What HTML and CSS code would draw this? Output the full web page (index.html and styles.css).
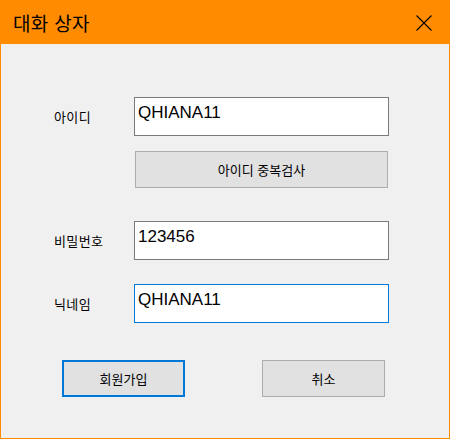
FILE: index.html
```html
<!DOCTYPE html>
<html lang="ko">
<head>
<meta charset="utf-8">
<title>대화 상자</title>
<link rel="stylesheet" href="styles.css">
</head>
<body>
<div class="window">
  <div class="titlebar">
    <span class="title">대화 상자</span>
    <svg class="close" width="16" height="16" viewBox="0 0 16 16"><path d="M0.5 0.5 L15.5 15.5 M15.5 0.5 L0.5 15.5" stroke="#000" stroke-width="1.1" fill="none"/></svg>
  </div>
  <div class="content">
    <div class="row row-id">
      <span class="label">아이디</span>
      <div class="input">QHIANA11</div>
    </div>
    <div class="row row-check">
      <button class="btn check">아이디 중복검사</button>
    </div>
    <div class="row row-pw">
      <span class="label">비밀번호</span>
      <div class="input">123456</div>
    </div>
    <div class="row row-nick">
      <span class="label">닉네임</span>
      <div class="input focused">QHIANA11</div>
    </div>
    <div class="actions">
      <button class="btn primary">회원가입</button>
      <button class="btn">취소</button>
    </div>
  </div>
</div>
</body>
</html>
```
FILE: styles.css
```css
* { box-sizing: border-box; }
html, body { margin: 0; padding: 0; }
body {
  width: 450px;
  height: 439px;
  font-family: "Noto Sans CJK KR", "Noto Sans", sans-serif;
  background: #f0f0f0;
}
.window {
  width: 450px;
  height: 439px;
  border: 1px solid #ff8c00;
  border-top: none;
  background: #f0f0f0;
  display: flex;
  flex-direction: column;
}
.titlebar {
  height: 44px;
  margin: 0 -1px;
  background: #ff8c00;
  display: flex;
  align-items: center;
  padding-left: 13px;
  padding-right: 18px;
  justify-content: space-between;
}
.title {
  font-size: 19px;
  color: #000;
  line-height: 1;
  margin-top: 1px;
  letter-spacing: 0.3px;
}
.close { display: block; margin-top: 1px; }
.content {
  display: flex;
  flex-direction: column;
  padding-top: 53px;
  padding-left: 53px;
}
.row {
  display: flex;
  align-items: center;
}
.label {
  width: 80px;
  font-size: 13px;
  color: #000;
  line-height: 1;
  letter-spacing: 0.4px;
}
.input {
  width: 255px;
  height: 39px;
  border: 1px solid #7a7a7a;
  background: #fff;
  font-family: "Liberation Sans", Arial, sans-serif;
  font-size: 17px;
  line-height: 20px;
  padding: 5px 0 0 3px;
  color: #000;
}
.input.focused { border-color: #0078d7; }
.row-check { margin-top: 15px; padding-left: 81px; }
.row-pw { margin-top: 33px; }
.row-nick { margin-top: 24px; }
.btn {
  font-family: "Noto Sans CJK KR", "Noto Sans", sans-serif;
  font-size: 13px;
  color: #000;
  background: #e1e1e1;
  border: 1px solid #adadad;
  padding: 0;
  margin: 0;
  height: 37px;
  width: 123px;
}
.check { width: 253px; }
.btn.primary { border: 2px solid #0078d7; }
.actions {
  display: flex;
  margin-top: 37px;
  padding-left: 8px;
  gap: 77px;
}
```
